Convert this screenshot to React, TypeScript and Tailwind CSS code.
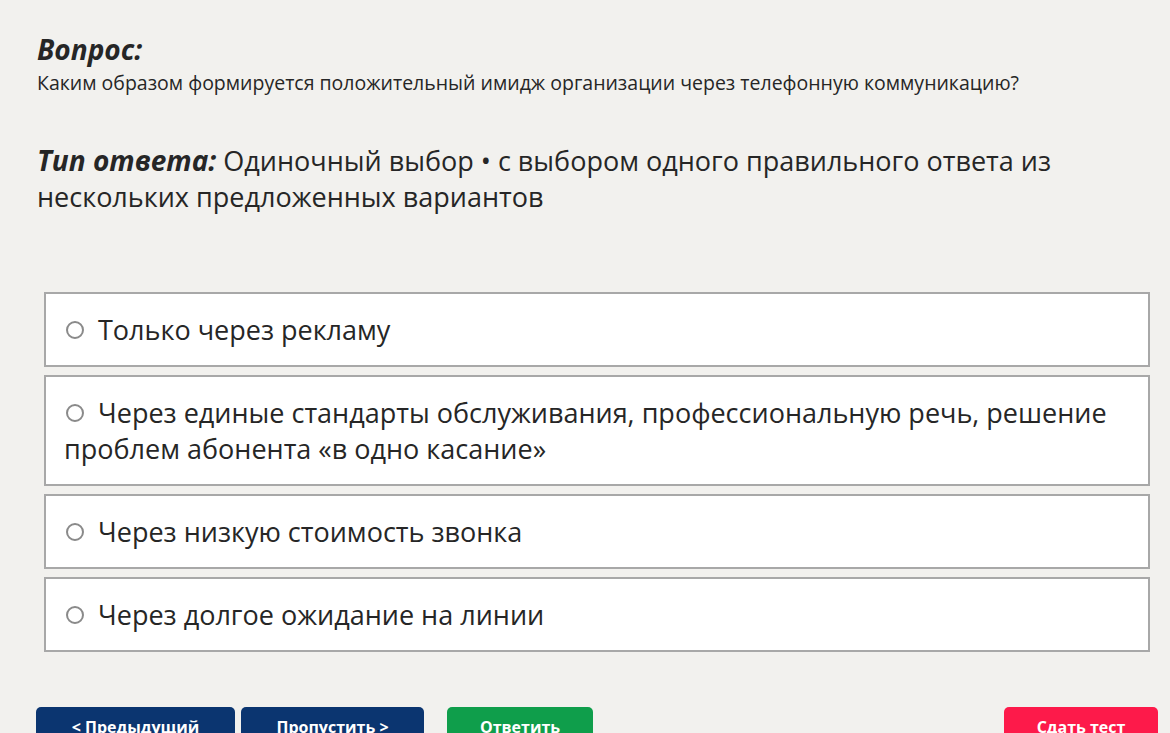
import { useState } from "react";

const options = [
  "Только через рекламу",
  "Через единые стандарты обслуживания, профессиональную речь, решение проблем абонента «в одно касание»",
  "Через низкую стоимость звонка",
  "Через долгое ожидание на линии",
];

const App = () => {
  const [selected, setSelected] = useState<number | null>(null);

  return (
    <div
      className="min-h-[733px] bg-[#f2f1ee] text-[#262626] overflow-hidden"
      style={{ fontFamily: '"Open Sans", "Noto Sans", sans-serif' }}
    >
      <div className="pl-[37px] pr-[20px] pt-[32px]">
        <h2 className="text-[28px] leading-[34px] font-bold italic">Вопрос:</h2>
        <p className="text-[19.5px] leading-[26px] mt-[4px]">
          Каким образом формируется положительный имидж организации через телефонную коммуникацию?
        </p>

        <p className="mt-[46px] text-[27px] leading-[36px] max-w-[1060px]">
          <span className="font-bold italic text-[28px] pr-[4px] mr-[3px]">Тип ответа:</span>Одиночный выбор • с выбором
          одного правильного ответа из нескольких предложенных вариантов
        </p>
      </div>

      <div className="mt-[77px] ml-[44px] mr-[20px] flex flex-col gap-[8px]">
        {options.map((text, i) => (
          <label
            key={i}
            onClick={() => setSelected(i)}
            className="block bg-white border-2 border-[#a8a8a8] px-[18px] pt-[18px] pb-[17px] text-[27px] leading-[36px] cursor-pointer"
          >
            <span
              className={
                "inline-block align-middle w-[18px] h-[18px] rounded-full border-2 mr-[14px] mt-[-6px] ml-[2px] " +
                (selected === i ? "border-[#0b3570] bg-[#0b3570]" : "border-[#8a8a8a] bg-white")
              }
            />
            {text}
          </label>
        ))}
      </div>

      <div className="mt-[55px] pl-[36px] pr-[12px] flex items-start">
        <button className="w-[199px] h-[40px] rounded-[5px] bg-[#0b3570] text-white text-[16px] font-bold">
          &lt; Предыдущий
        </button>
        <button className="ml-[6px] w-[183px] h-[40px] rounded-[5px] bg-[#0b3570] text-white text-[16px] font-bold">
          Пропустить &gt;
        </button>
        <button className="ml-[23px] w-[146px] h-[40px] rounded-[5px] bg-[#0f9e4b] text-white text-[16px] font-bold">
          Ответить
        </button>
        <button className="ml-auto w-[154px] h-[40px] rounded-[5px] bg-[#fd1a4a] text-white text-[16px] font-bold">
          Сдать тест
        </button>
      </div>
    </div>
  );
};

export default App;
